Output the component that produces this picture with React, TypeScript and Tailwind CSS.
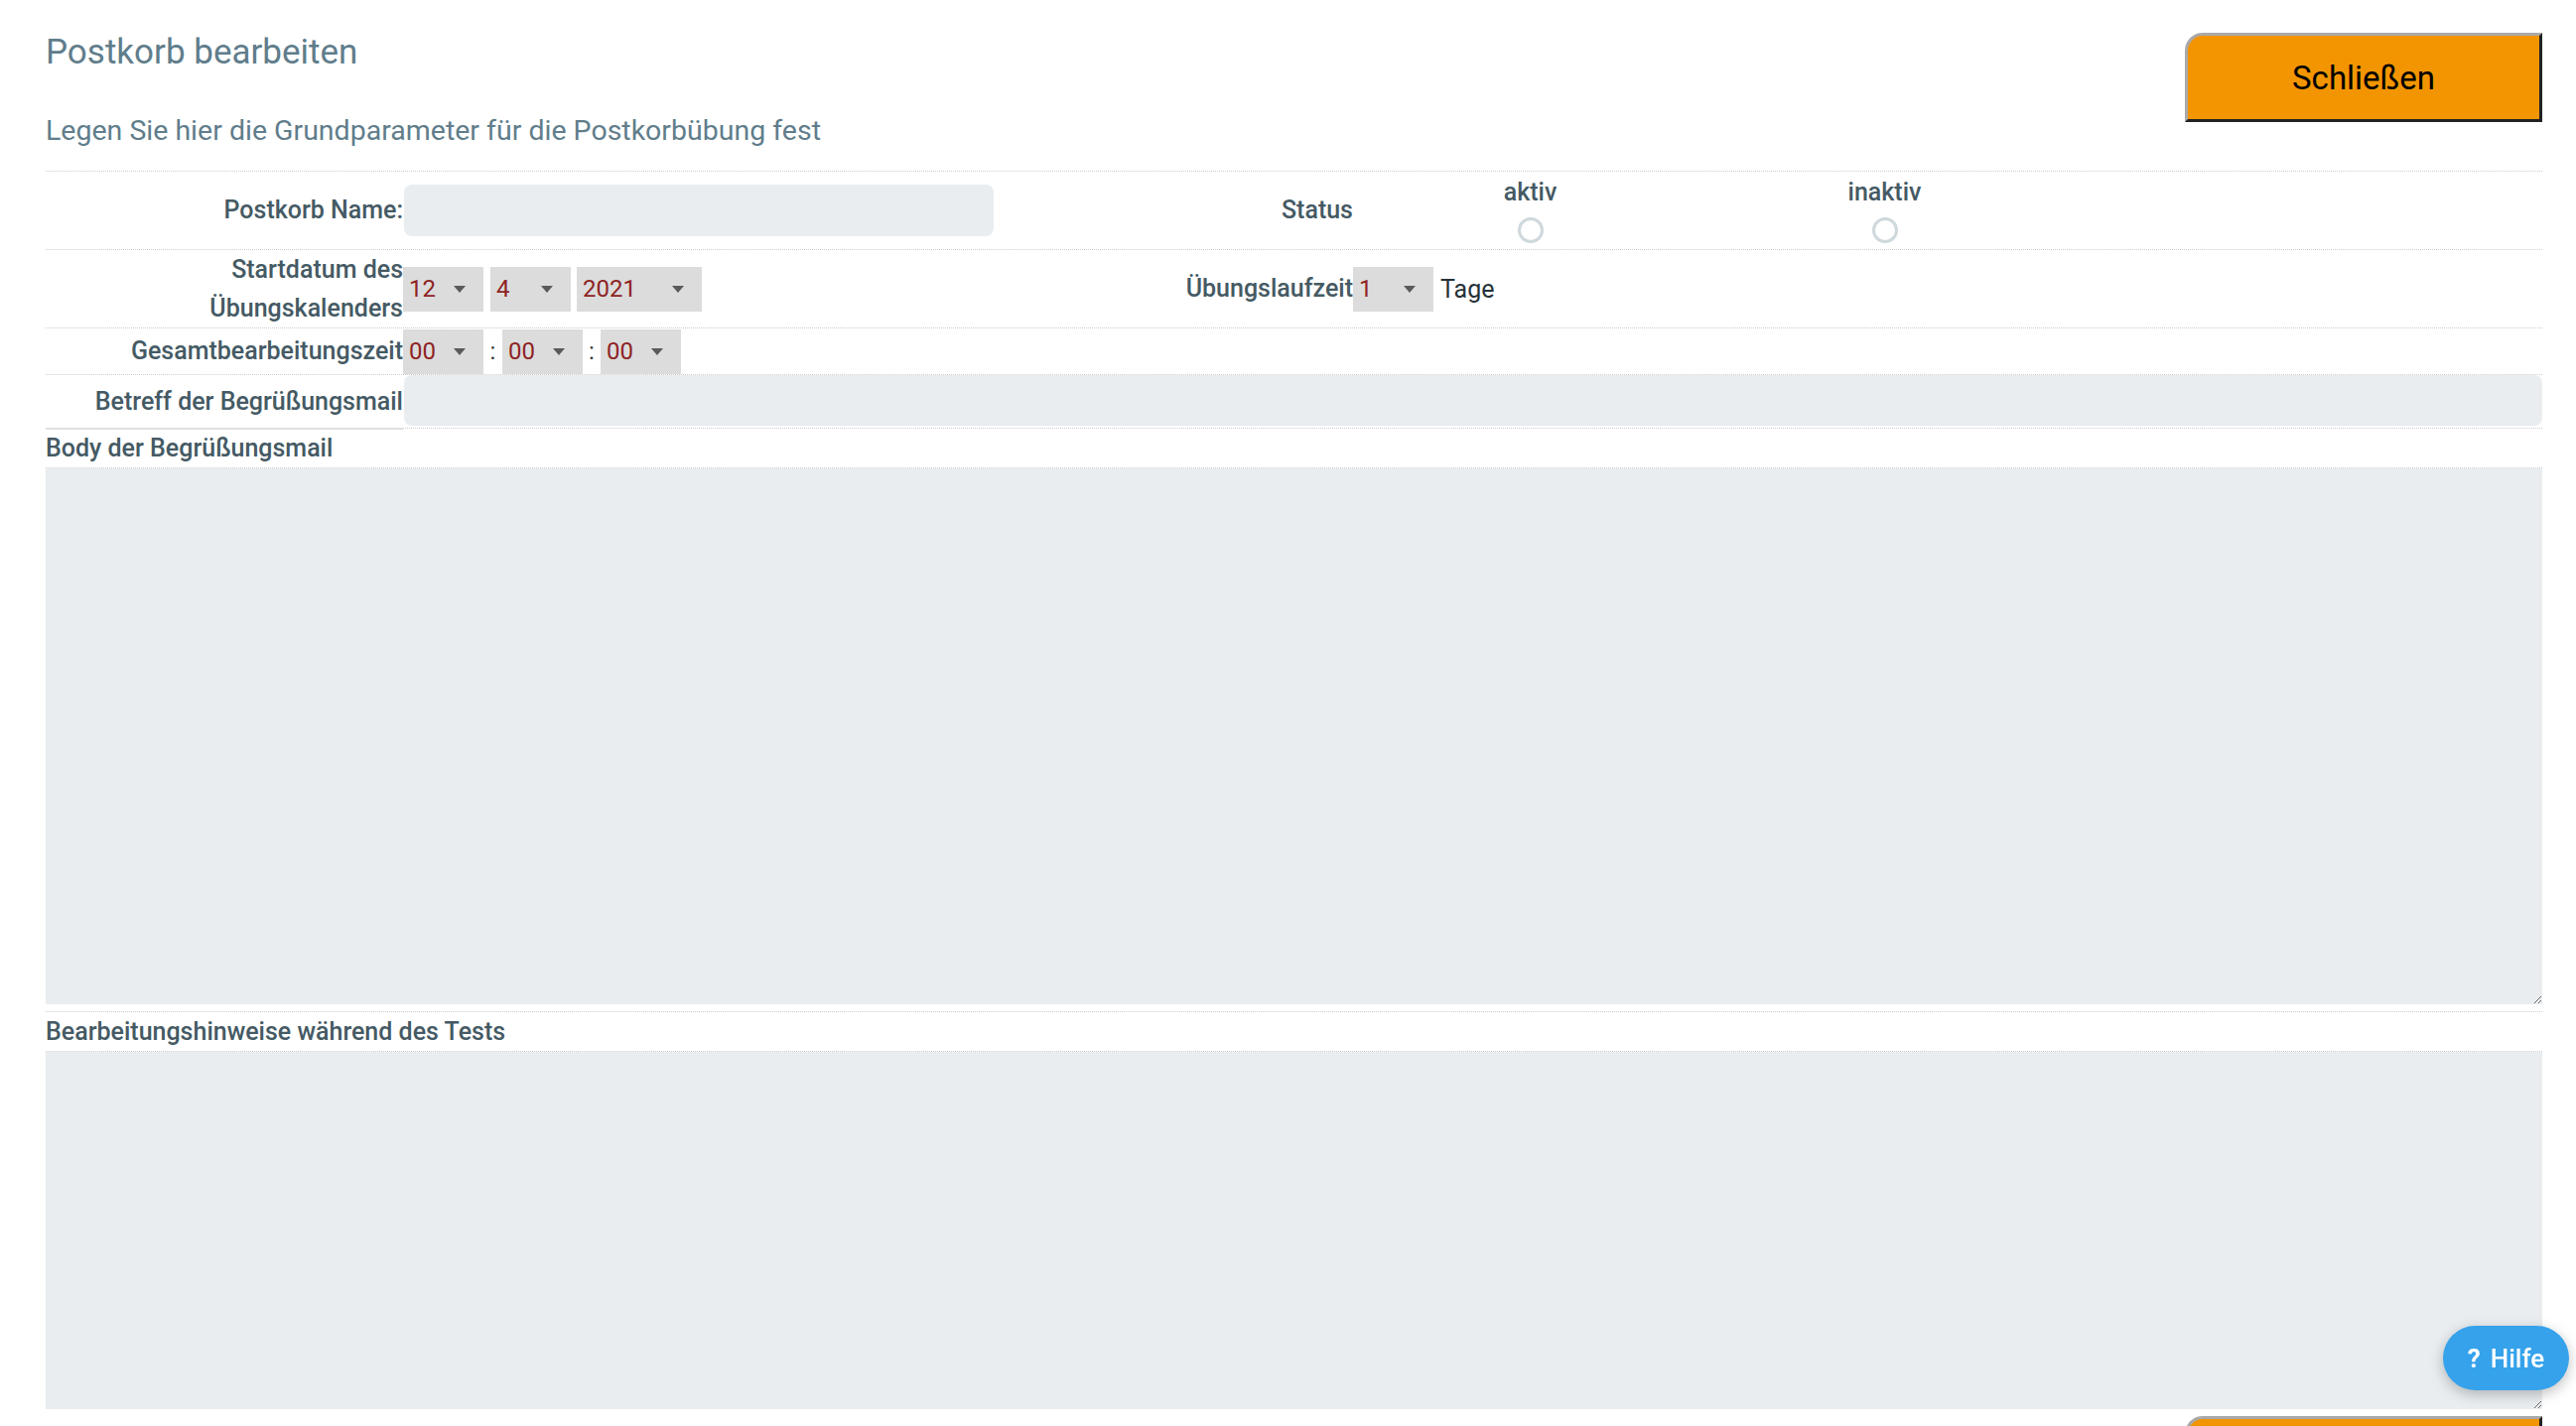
import React from "react";

const Arrow = () => (
  <svg width="12" height="7" viewBox="0 0 12 7" className="shrink-0">
    <path d="M0 0H12L6 7Z" fill="#5a5a5a" />
  </svg>
);

const Sel = ({ value, w }: { value: string; w: string }) => (
  <div
    className={`${w} h-[45px] bg-[#dcdcdc] flex items-center justify-between pl-[6px] pr-[18px] text-[24px] leading-none text-[#8e2323]`}
  >
    <span>{value}</span>
    <Arrow />
  </div>
);

const Radio = () => (
  <div className="w-[26px] h-[26px] rounded-full border-[3px] border-[#cfd8dc] bg-white" />
);

const OrangeButton = ({ children }: { children?: React.ReactNode }) => (
  <button className="w-[360px] h-[90px] bg-[#f29500] border-[3px] border-t-[#a9a9a9] border-l-[#a9a9a9] border-b-[#222222] border-r-[#222222] rounded-tl-[18px] text-[33px] leading-none text-black font-['Roboto',sans-serif]">
    {children}
  </button>
);

const labelCls =
  "text-[25px] font-medium text-[#455a64] leading-[28px] text-right";

export default function App() {
  return (
    <div className="w-[2595px] h-[1437px] overflow-hidden bg-white font-['Roboto',sans-serif] relative">
      <div className="pl-[46px] pr-[34px]">
        {/* Header */}
        <div className="flex justify-between items-start h-[172px]">
          <div>
            <h1 className="pt-[35px] text-[35px] leading-none font-normal text-[#607d8b]">
              Postkorb bearbeiten
            </h1>
            <p className="mt-[48px] text-[28.5px] leading-none text-[#607d8b]">
              Legen Sie hier die Grundparameter für die Postkorbübung fest
            </p>
          </div>
          <div className="mt-[33px]">
            <OrangeButton>Schließen</OrangeButton>
          </div>
        </div>

        {/* Row 1 */}
        <div className="flex items-center h-[79px] border-t border-dotted border-[#cccccc]">
          <div className={`w-[360px] ${labelCls}`}>Postkorb Name:</div>
          <div className="w-[694px]">
            <div className="ml-[1px] w-[594px] h-[52px] rounded-[8px] bg-[#e9edf0]" />
          </div>
          <div className={`w-[263px] ${labelCls}`}>Status</div>
          <div className="flex-1 flex">
            <div className="w-[357px] flex flex-col items-center">
              <span className="text-[25px] font-medium text-[#455a64] leading-[28px]">
                aktiv
              </span>
              <div className="mt-[11px]">
                <Radio />
              </div>
            </div>
            <div className="w-[357px] flex flex-col items-center">
              <span className="text-[25px] font-medium text-[#455a64] leading-[28px]">
                inaktiv
              </span>
              <div className="mt-[11px]">
                <Radio />
              </div>
            </div>
          </div>
        </div>

        {/* Row 2 */}
        <div className="flex items-center h-[79px] border-t border-dotted border-[#cccccc]">
          <div className="w-[360px] text-[25px] font-medium text-[#455a64] leading-[39px] text-right">
            Startdatum des
            <br />
            Übungskalenders
          </div>
          <div className="w-[694px] flex items-center">
            <Sel value="12" w="w-[81px]" />
            <div className="w-[7px]" />
            <Sel value="4" w="w-[81px]" />
            <div className="w-[6px]" />
            <Sel value="2021" w="w-[126px]" />
          </div>
          <div className={`w-[263px] ${labelCls}`}>Übungslaufzeit</div>
          <div className="flex-1 flex items-center">
            <Sel value="1" w="w-[81px]" />
            <span className="ml-[7px] text-[25px] leading-none text-[#263238]">Tage</span>
          </div>
        </div>

        {/* Row 3 */}
        <div className="flex items-center h-[47px] border-t border-dotted border-[#cccccc]">
          <div className={`w-[360px] ${labelCls}`}>Gesamtbearbeitungszeit</div>
          <div className="flex items-center">
            <Sel value="00" w="w-[81px]" />
            <span className="w-[19px] text-center text-[24px] leading-none text-[#333333]">:</span>
            <Sel value="00" w="w-[81px]" />
            <span className="w-[18px] text-center text-[24px] leading-none text-[#333333]">:</span>
            <Sel value="00" w="w-[81px]" />
          </div>
        </div>

        {/* Row 4 */}
        <div className="flex items-stretch h-[56px] border-t border-dotted border-[#cccccc]">
          <div className="w-[360px] flex items-center justify-end border-b-2 border-solid border-[#e0e0e0]">
            <span className={labelCls}>Betreff der Begrüßungsmail</span>
          </div>
          <div className="flex-1 h-[54px] pb-[2px] border-b border-dotted border-[#cccccc]">
            <div className="ml-[1px] h-[51px] rounded-[8px] bg-[#e9edf0]" />
          </div>
        </div>

        {/* Body */}
        <div className="h-[39px] border-b border-dotted border-[#cccccc] text-[25px] font-medium text-[#455a64] leading-[38px]">
          Body der Begrüßungsmail
        </div>
        <textarea className="block w-full h-[540px] bg-[#e9edf0] border-0 outline-none p-2 text-[20px]" />

        <div className="h-[7px]" />
        <div className="h-[41px] border-t border-b border-dotted border-[#cccccc] text-[25px] font-medium text-[#455a64] leading-[39px]">
          Bearbeitungshinweise während des Tests
        </div>
        <textarea className="block w-full h-[360px] bg-[#e9edf0] border-0 outline-none p-2 text-[20px]" />

        <div className="flex justify-end mt-[7px]">
          <OrangeButton />
        </div>
      </div>

      <button className="fixed right-[7px] bottom-[36px] w-[127px] h-[65px] rounded-full bg-[#35a2eb] text-white text-[26px] leading-none flex items-center justify-center gap-[10px] shadow-[0_4px_14px_rgba(0,0,0,0.25)]">
        <span className="font-bold">?</span>
        <span className="font-medium">Hilfe</span>
      </button>
    </div>
  );
}
